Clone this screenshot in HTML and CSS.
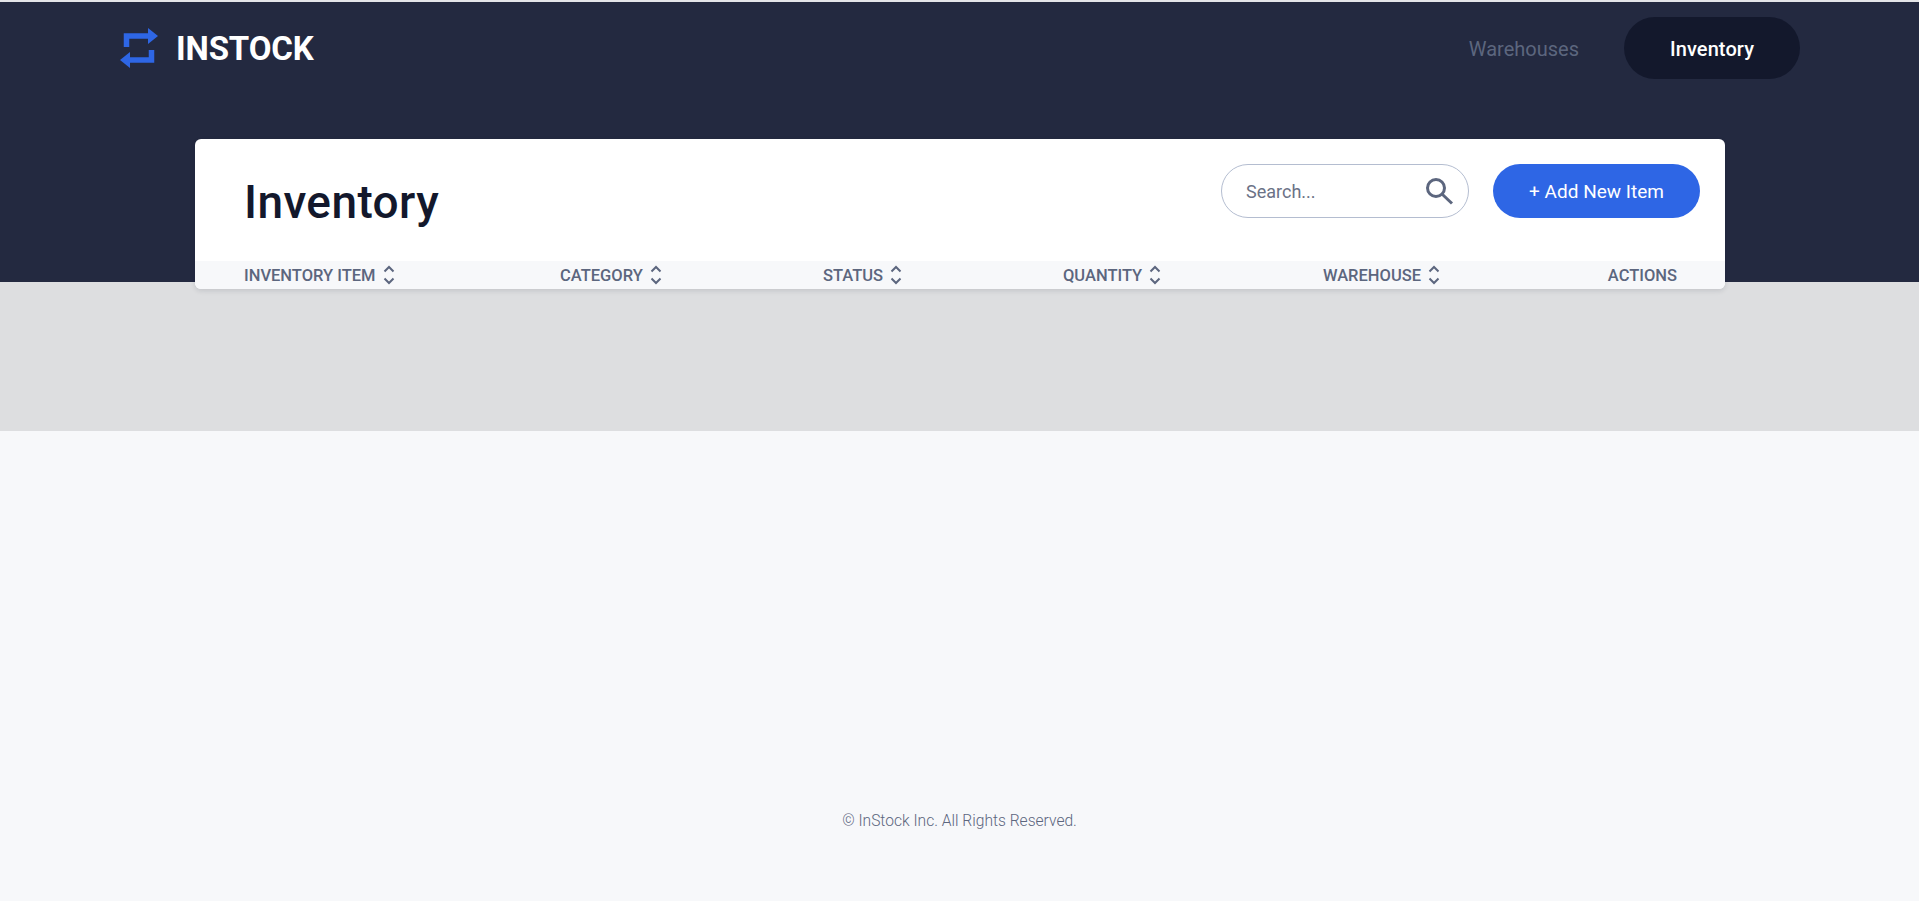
FILE: index.html
```html
<!DOCTYPE html>
<html lang="en">
<head>
<meta charset="utf-8">
<title>InStock</title>
<link rel="stylesheet" href="styles.css">
</head>
<body>
<div class="page">
  <header class="hero">
    <nav class="nav">
      <a class="brand" href="#">
        <svg class="brand-icon" viewBox="0 0 40 40" aria-hidden="true">
          <path class="brand-line" d="M7.500 19V8H30M32.500 22V32H10"/>
          <path class="brand-head" d="M29 0 39 8 29 16ZM11 24 1 32 11 40Z"/>
        </svg>
        <span class="brand-name">INSTOCK</span>
      </a>
      <div class="nav-links">
        <a class="nav-link" href="#">Warehouses</a>
        <a class="nav-link nav-link-active" href="#">Inventory</a>
      </div>
    </nav>
  </header>
  <main class="band">
    <section class="card">
      <div class="card-head">
        <h1 class="title">Inventory</h1>
        <div class="tools">
          <label class="search">
            <span class="search-text">Search...</span>
            <svg class="search-icon" viewBox="0 0 28 28" aria-hidden="true">
              <circle cx="11" cy="11" r="8.500" fill="none" stroke="#5c667e" stroke-width="3"/>
              <path d="M17.500 17.500 27 26.500" fill="none" stroke="#5c667e" stroke-width="3"/>
            </svg>
          </label>
          <button class="add-btn" type="button">+ Add New Item</button>
        </div>
      </div>
      <div class="table-head">
        <div class="col">INVENTORY ITEM <svg class="sort" viewBox="0 0 12 20"><path d="M1.500 6.500 6 2 10.500 6.500M1.500 13.500 6 18 10.500 13.500"/></svg></div>
        <div class="col">CATEGORY <svg class="sort" viewBox="0 0 12 20"><path d="M1.500 6.500 6 2 10.500 6.500M1.500 13.500 6 18 10.500 13.500"/></svg></div>
        <div class="col">STATUS <svg class="sort" viewBox="0 0 12 20"><path d="M1.500 6.500 6 2 10.500 6.500M1.500 13.500 6 18 10.500 13.500"/></svg></div>
        <div class="col">QUANTITY <svg class="sort" viewBox="0 0 12 20"><path d="M1.500 6.500 6 2 10.500 6.500M1.500 13.500 6 18 10.500 13.500"/></svg></div>
        <div class="col">WAREHOUSE <svg class="sort" viewBox="0 0 12 20"><path d="M1.500 6.500 6 2 10.500 6.500M1.500 13.500 6 18 10.500 13.500"/></svg></div>
        <div class="col col-actions">ACTIONS</div>
      </div>
    </section>
  </main>
  <footer class="footer">© InStock Inc. All Rights Reserved.</footer>
</div>
</body>
</html>
```
FILE: styles.css
```css
* { box-sizing: border-box; }
html, body { margin: 0; height: 100%; }
body {
  background: #f7f8fa;
  font-family: Roboto, "Noto Sans", sans-serif;
  color: #13182c;
}
a { text-decoration: none; }
.page { height: 901px; display: flex; flex-direction: column; border-top: 2px solid #e4e5e8; overflow: hidden; }
.hero { height: 280px; background: #232940; flex: none; }
.nav { display: flex; justify-content: space-between; align-items: center; padding: 15px 119px 0 119px; }
.brand { display: flex; align-items: center; gap: 17px; color: #fff; }
.brand-icon { width: 40px; height: 40px; display: block; margin-top: -1px; }
.brand-line { fill: none; stroke: #2e66e5; stroke-width: 5.5; }
.brand-head { fill: #2e66e5; }
.brand-name { font-size: 33px; font-weight: 700; letter-spacing: -0.15px; line-height: 40px; margin-top: 2px; }
.nav-links { display: flex; align-items: center; gap: 45px; }
.nav-link { font-size: 20px; color: #5c667e; height: 62px; line-height: 64px; }
.nav-link-active { width: 176px; border-radius: 31px; background: #13182c; color: #fff; font-weight: 500; letter-spacing: 0.1px; text-align: center; }
.band { height: 149px; background: #dddee0; flex: none; }
.card {
  margin: -143px 194px 0 195px;
  height: 150px;
  background: #fff;
  border-radius: 6px;
  box-shadow: 0 2px 5px rgba(19, 24, 44, 0.12);
  overflow: hidden;
  display: flex;
  flex-direction: column;
}
.card-head { height: 122px; display: flex; justify-content: space-between; padding: 25px 25px 0 49px; }
.title { margin: 8px 0 0; font-size: 46px; font-weight: 500; letter-spacing: 0.4px; line-height: 60px; color: #13182c; }
.tools { display: flex; gap: 24px; align-items: flex-start; }
.search { width: 248px; height: 54px; border: 1px solid #b4bdd0; border-radius: 27px; display: flex; justify-content: space-between; align-items: center; padding: 0 15px 0 24px; }
.search-text { font-size: 18px; color: #6b7286; }
.search-icon { width: 28px; height: 28px; display: block; }
.add-btn { width: 207px; height: 54px; border: 0; border-radius: 27px; background: #2e66e5; color: #fff; font: inherit; font-size: 19px; padding: 0; }
.table-head { height: 28px; background: #f7f8fa; display: grid; grid-template-columns: 316px 263px 240px 260px 260px 1fr; padding: 0 48px 0 49px; align-items: center; }
.col { font-size: 16.5px; font-weight: 500; color: #5c667e; display: flex; align-items: center; gap: 3px; white-space: pre; }
.col-actions { justify-content: flex-end; }
.sort { width: 12px; height: 20px; display: block; fill: none; stroke: #5c667e; stroke-width: 2; }
.footer { margin-top: auto; padding-bottom: 71px; text-align: center; font-size: 15.6px; font-weight: 300; color: #5c667e; }
```
